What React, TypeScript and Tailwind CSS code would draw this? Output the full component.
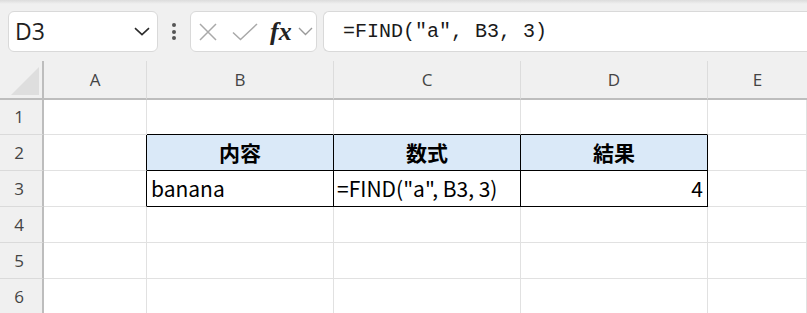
import React from "react";

const cellFont = { fontFamily: '"Noto Sans CJK JP", "Noto Sans", sans-serif' };

type Row = { n: number; h: string; cells: string[] };

const colLetters = ["A", "B", "C", "D", "E"];

const rows: Row[] = [
  { n: 1, h: "h-[35px]", cells: ["", "", "", "", ""] },
  { n: 2, h: "h-[36px]", cells: ["", "内容", "数式", "結果", ""] },
  { n: 3, h: "h-[36px]", cells: ["", "banana", '=FIND("a", B3, 3)', "4", ""] },
  { n: 4, h: "h-[36px]", cells: ["", "", "", "", ""] },
  { n: 5, h: "h-[36px]", cells: ["", "", "", "", ""] },
  { n: 6, h: "h-[36px]", cells: ["", "", "", "", ""] },
];

function cellClass(r: number, c: number) {
  // r = row number, c = column index (0 = A)
  const inTable = (r === 2 || r === 3) && c >= 1 && c <= 3;
  let right = "border-r-[#e1e1e1]";
  let bottom = "border-b-[#e1e1e1]";
  if (inTable || ((r === 2 || r === 3) && c === 0)) right = "border-r-black";
  if (inTable || (r === 1 && c >= 1 && c <= 3)) bottom = "border-b-black";
  let bg = "bg-white";
  if (r === 2 && inTable) bg = "bg-[#dae9f8]";
  let align = "justify-start pl-[4px]";
  if (r === 2) align = "justify-center font-bold";
  if (r === 3 && c === 3) align = "justify-end pr-[4px]";
  if (r === 3 && c === 2) align = "justify-start pl-[3px]";
  return `flex items-center border-r border-b ${right} ${bottom} ${bg} ${align}`;
}

function NameBox() {
  return (
    <div className="flex h-[41px] w-[150px] items-center justify-between rounded-[6px] border border-[#d9d9d9] bg-white pl-[6px] pr-[6px]">
      <span className="text-[23px] leading-none text-[#1f1f1f]" style={{ fontFamily: '"Open Sans", "Noto Sans", sans-serif' }}>
        D3
      </span>
      <svg width="16" height="9" viewBox="0 0 16 9" className="mr-[1px]">
        <path d="M1 1.2 L8 7.6 L15 1.2" fill="none" stroke="#2b2b2b" strokeWidth="1.6" />
      </svg>
    </div>
  );
}

function FunctionBox() {
  return (
    <div className="flex h-[41px] w-[127px] items-center rounded-[6px] border border-[#d9d9d9] bg-white pl-[7px]">
      <svg width="20" height="18" viewBox="0 0 20 18">
        <path d="M2 1 L18 17 M18 1 L2 17" stroke="#a9a9a9" strokeWidth="1.5" fill="none" />
      </svg>
      <svg width="26" height="18" viewBox="0 0 26 18" className="ml-[14px]">
        <path d="M1 9.5 L8.5 16.5 L25 1" stroke="#a9a9a9" strokeWidth="1.5" fill="none" />
      </svg>
      <span
        className="ml-[12px] text-[26px] font-bold italic leading-none text-[#222]"
        style={{ fontFamily: '"Liberation Serif", "DejaVu Serif", serif' }}
      >
        fx
      </span>
      <svg width="15" height="9" viewBox="0 0 15 9" className="ml-[6px]">
        <path d="M1 1 L7.5 7.5 L14 1" fill="none" stroke="#9a9a9a" strokeWidth="1.4" />
      </svg>
    </div>
  );
}

export default function App() {
  return (
    <div className="h-[313px] w-[807px] overflow-hidden bg-white">
      {/* formula bar */}
      <div className="relative h-[61px] bg-[#f0f0f0]">
        <div className="h-[4px] bg-gradient-to-b from-[#dcdcdc] to-[#f0f0f0]" />
        <div className="flex items-start pl-[8px] pt-[7px]">
          <NameBox />
          <div className="flex h-[41px] w-[32px] flex-col items-center justify-center gap-[2.5px]">
            <div className="h-[4px] w-[4px] rounded-full bg-[#555]" />
            <div className="h-[4px] w-[4px] rounded-full bg-[#555]" />
            <div className="h-[4px] w-[4px] rounded-full bg-[#555]" />
          </div>
          <FunctionBox />
          <div className="ml-[6px] flex h-[41px] flex-1 items-center rounded-l-[6px] border border-r-0 border-[#d9d9d9] bg-white pl-[19px]">
            <span
              className="text-[20px] leading-none text-[#1a1a1a]"
              style={{ fontFamily: '"Liberation Mono", "DejaVu Sans Mono", monospace' }}
            >
              =FIND("a", B3, 3)
            </span>
          </div>
        </div>
      </div>

      {/* sheet */}
      <div className="grid grid-cols-[44px_103px_187px_187px_187px_1fr]">
        <div className="relative h-[39px] border-r-2 border-b-2 border-[#bdbdbd] bg-[#f0f0f0]">
          <svg width="29" height="29" viewBox="0 0 29 29" className="absolute left-[11px] top-[6px]">
            <path d="M28 0 L28 28 L0 28 Z" fill="#dedede" />
          </svg>
        </div>
        {colLetters.map((l, i) => (
          <div
            key={l}
            className={`flex h-[39px] items-center justify-center border-b-2 border-b-[#bdbdbd] bg-[#f0f0f0] text-[17px] text-[#444] ${
              i < 4 ? "border-r border-r-[#dcdcdc]" : ""
            }`}
            style={{ fontFamily: '"Open Sans", "Noto Sans", sans-serif' }}
          >
            {l}
          </div>
        ))}

        {rows.map((row) => (
          <React.Fragment key={row.n}>
            <div
              className={`flex ${row.h} items-center justify-center border-r-2 border-b border-r-[#bdbdbd] border-b-[#dadada] bg-[#f0f0f0] pr-[4px] text-[17px] text-[#444]`}
              style={{ fontFamily: '"Open Sans", "Noto Sans", sans-serif' }}
            >
              {row.n}
            </div>
            {row.cells.map((txt, c) => (
              <div key={c} className={`${row.h} ${cellClass(row.n, c)} text-[21px] leading-none text-black`} style={cellFont}>
                {txt}
              </div>
            ))}
          </React.Fragment>
        ))}
      </div>
    </div>
  );
}
